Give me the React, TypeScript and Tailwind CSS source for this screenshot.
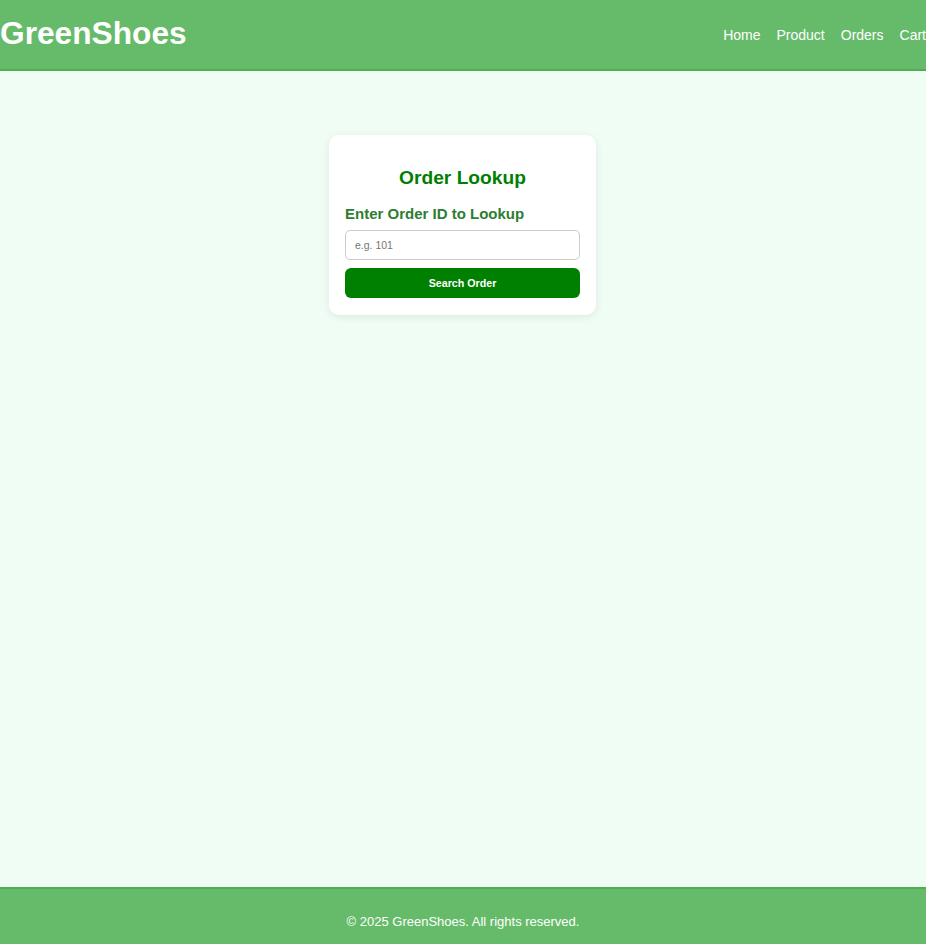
export default function App() {
  return (
    <div className="min-h-[944px] flex flex-col overflow-hidden bg-[#f0fdf4]" style={{ fontFamily: '"Liberation Sans", Arial, sans-serif' }}>
      <header className="h-[71px] bg-[#66bb6a] border-b-2 border-[#4caf50] flex items-center justify-between text-white">
        <h1 className="text-[31.7px] font-bold leading-none -mt-[2px]">GreenShoes</h1>
        <nav className="flex gap-4 text-[14px] mt-[1px]">
          <a>Home</a>
          <a>Product</a>
          <a>Orders</a>
          <a>Cart</a>
        </nav>
      </header>
      <main className="flex-1 flex justify-center items-start pt-[64px]">
        <div className="w-[267px] ml-[-1px] bg-white rounded-[10px] shadow-[0_2px_8px_rgba(0,0,0,0.08)] px-4 pt-4 pb-[17px]">
          <h2 className="mt-[16px] text-center text-[19.2px] leading-[22px] font-bold text-[#008000]">Order Lookup</h2>
          <label className="block mt-4 text-[15px] leading-[17px] font-bold text-[#2e7d32]">Enter Order ID to Lookup</label>
          <input
            className="mt-[8px] block w-full h-[30px] border border-[#ccc] rounded-[5px] px-[9px] text-[10.5px] placeholder:text-[#757575] outline-none"
            placeholder="e.g. 101"
          />
          <button className="mt-2 block w-full h-[30px] bg-[#008000] rounded-[6px] text-white text-[10.7px] font-bold">Search Order</button>
        </div>
      </main>
      <footer className="h-[57px] bg-[#66bb6a] border-t-2 border-[#4caf50] text-white text-center text-[13px] leading-[20px] pt-[23px]">
        © 2025 GreenShoes. All rights reserved.
      </footer>
    </div>
  );
}
